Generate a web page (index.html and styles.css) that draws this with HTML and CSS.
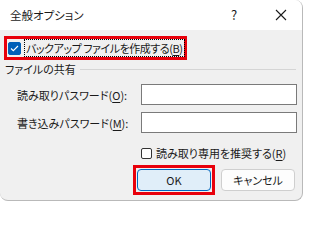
FILE: index.html
```html
<!DOCTYPE html>
<html lang="ja">
<head>
<meta charset="utf-8">
<link rel="stylesheet" href="styles.css">
</head>
<body>
<div class="window">
  <div class="titlebar">
    <span class="title">全般オプション</span>
    <span class="help">?</span>
    <svg class="close" width="12" height="12" viewBox="0 0 12 12"><path d="M1 1L11 11M11 1L1 11" stroke="#1a1a1a" stroke-width="1.1" fill="none"/></svg>
  </div>
  <div class="content">
    <div class="backup-row">
      <span class="check checked"><svg width="9" height="7" viewBox="0 0 9 7"><path d="M1 3.5L3.3 5.7L8 1" stroke="#fff" stroke-width="1.1" fill="none"/></svg></span>
      <span class="focus-label">バックアップ ファイルを作成する(<u>B</u>)</span>
    </div>
    <div class="group-head">
      <span>ファイルの共有</span>
      <span class="rule"></span>
    </div>
    <div class="field">
      <span class="field-label">読み取りパスワード(<u>O</u>):</span>
      <span class="input"></span>
    </div>
    <div class="field">
      <span class="field-label">書き込みパスワード(<u>M</u>):</span>
      <span class="input"></span>
    </div>
    <div class="ro-row">
      <span class="check"></span>
      <span>読み取り専用を推奨する(<u>R</u>)</span>
    </div>
    <div class="buttons">
      <div class="ok-frame"><span class="btn ok">OK</span></div>
      <span class="btn cancel">キャンセル</span>
    </div>
  </div>
</div>
</body>
</html>
```
FILE: styles.css
```css
html, body {
  margin: 0;
  padding: 0;
  background: #ffffff;
}
body {
  width: 304px;
  height: 203px;
  overflow: hidden;
  font-family: "Noto Sans CJK JP", "Noto Sans", sans-serif;
  font-size: 11px;
  font-feature-settings: "palt";
  color: #1a1a1a;
  white-space: nowrap;
}
.window {
  width: 302px;
  height: 200px;
  border-right: 1px solid #b9b9b9;
  border-bottom: 1px solid #b9b9b9;
  border-radius: 0 8px 8px 8px;
  overflow: hidden;
  background: #f0f0f0;
  display: flex;
  flex-direction: column;
}
.titlebar {
  height: 30px;
  background: #ffffff;
  display: flex;
  align-items: center;
  padding-left: 10px;
  flex-shrink: 0;
}
.title {
  flex: 1;
  font-size: 11.5px;
  line-height: 14px;
}
.help {
  width: 12px;
  margin-right: 32px;
  font-size: 13px;
  line-height: 14px;
}
.close {
  margin-right: 15px;
}
.content {
  padding: 6px 0 0 4px;
  display: flex;
  flex-direction: column;
}
.backup-row {
  width: 177px;
  height: 18px;
  border: 3px solid #e8000b;
  display: flex;
  align-items: center;
  gap: 3px;
}
.check {
  width: 11px;
  height: 11px;
  border: 1px solid #5a5a5a;
  border-radius: 2px;
  background: #fff;
  display: inline-flex;
  align-items: center;
  justify-content: center;
  flex-shrink: 0;
  box-sizing: content-box;
}
.check.checked {
  background: #005fb8;
  border-color: #005fb8;
  margin-left: 1px;
}
.focus-label {
  outline: 1px dotted #000;
  line-height: 16px;
  padding: 0 1px;
  margin-left: 1px;
  letter-spacing: -0.45px;
}
.group-head {
  display: flex;
  align-items: center;
  margin-top: 2px;
  margin-left: 1px;
  height: 14px;
  line-height: 14px;
}
.rule {
  flex: 1;
  height: 1px;
  background: #d5d5d5;
  margin-left: 4px;
  margin-right: 6px;
  margin-top: 1px;
}
.field {
  display: flex;
  align-items: center;
  margin-top: 8px;
  height: 21px;
}
.field + .field {
  margin-top: 7px;
}
.field-label {
  width: 124px;
  padding-left: 13px;
}
.input {
  width: 154px;
  height: 19px;
  border: 1px solid #7a7a7a;
  background: #fff;
}
.ro-row {
  display: flex;
  align-items: center;
  gap: 4px;
  margin-top: 13px;
  margin-left: 137px;
  height: 14px;
}
.ro-row .check {
  width: 9px;
  height: 9px;
  border-color: #333;
}
.buttons {
  display: flex;
  align-items: center;
  margin-top: 5px;
  margin-left: 129px;
  gap: 6px;
}
.ok-frame {
  border: 3px solid #e8000b;
  padding: 1px 1px;
}
.btn {
  display: flex;
  align-items: center;
  justify-content: center;
  height: 20px;
  border-radius: 4px;
  box-sizing: content-box;
}
.ok {
  width: 72px;
  border: 1px solid #0067c0;
  background: #e0eef9;
}
.cancel {
  width: 72px;
  border: 1px solid #cfcfcf;
  background: #fdfdfd;
}
u {
  text-underline-offset: 2px;
}
```
